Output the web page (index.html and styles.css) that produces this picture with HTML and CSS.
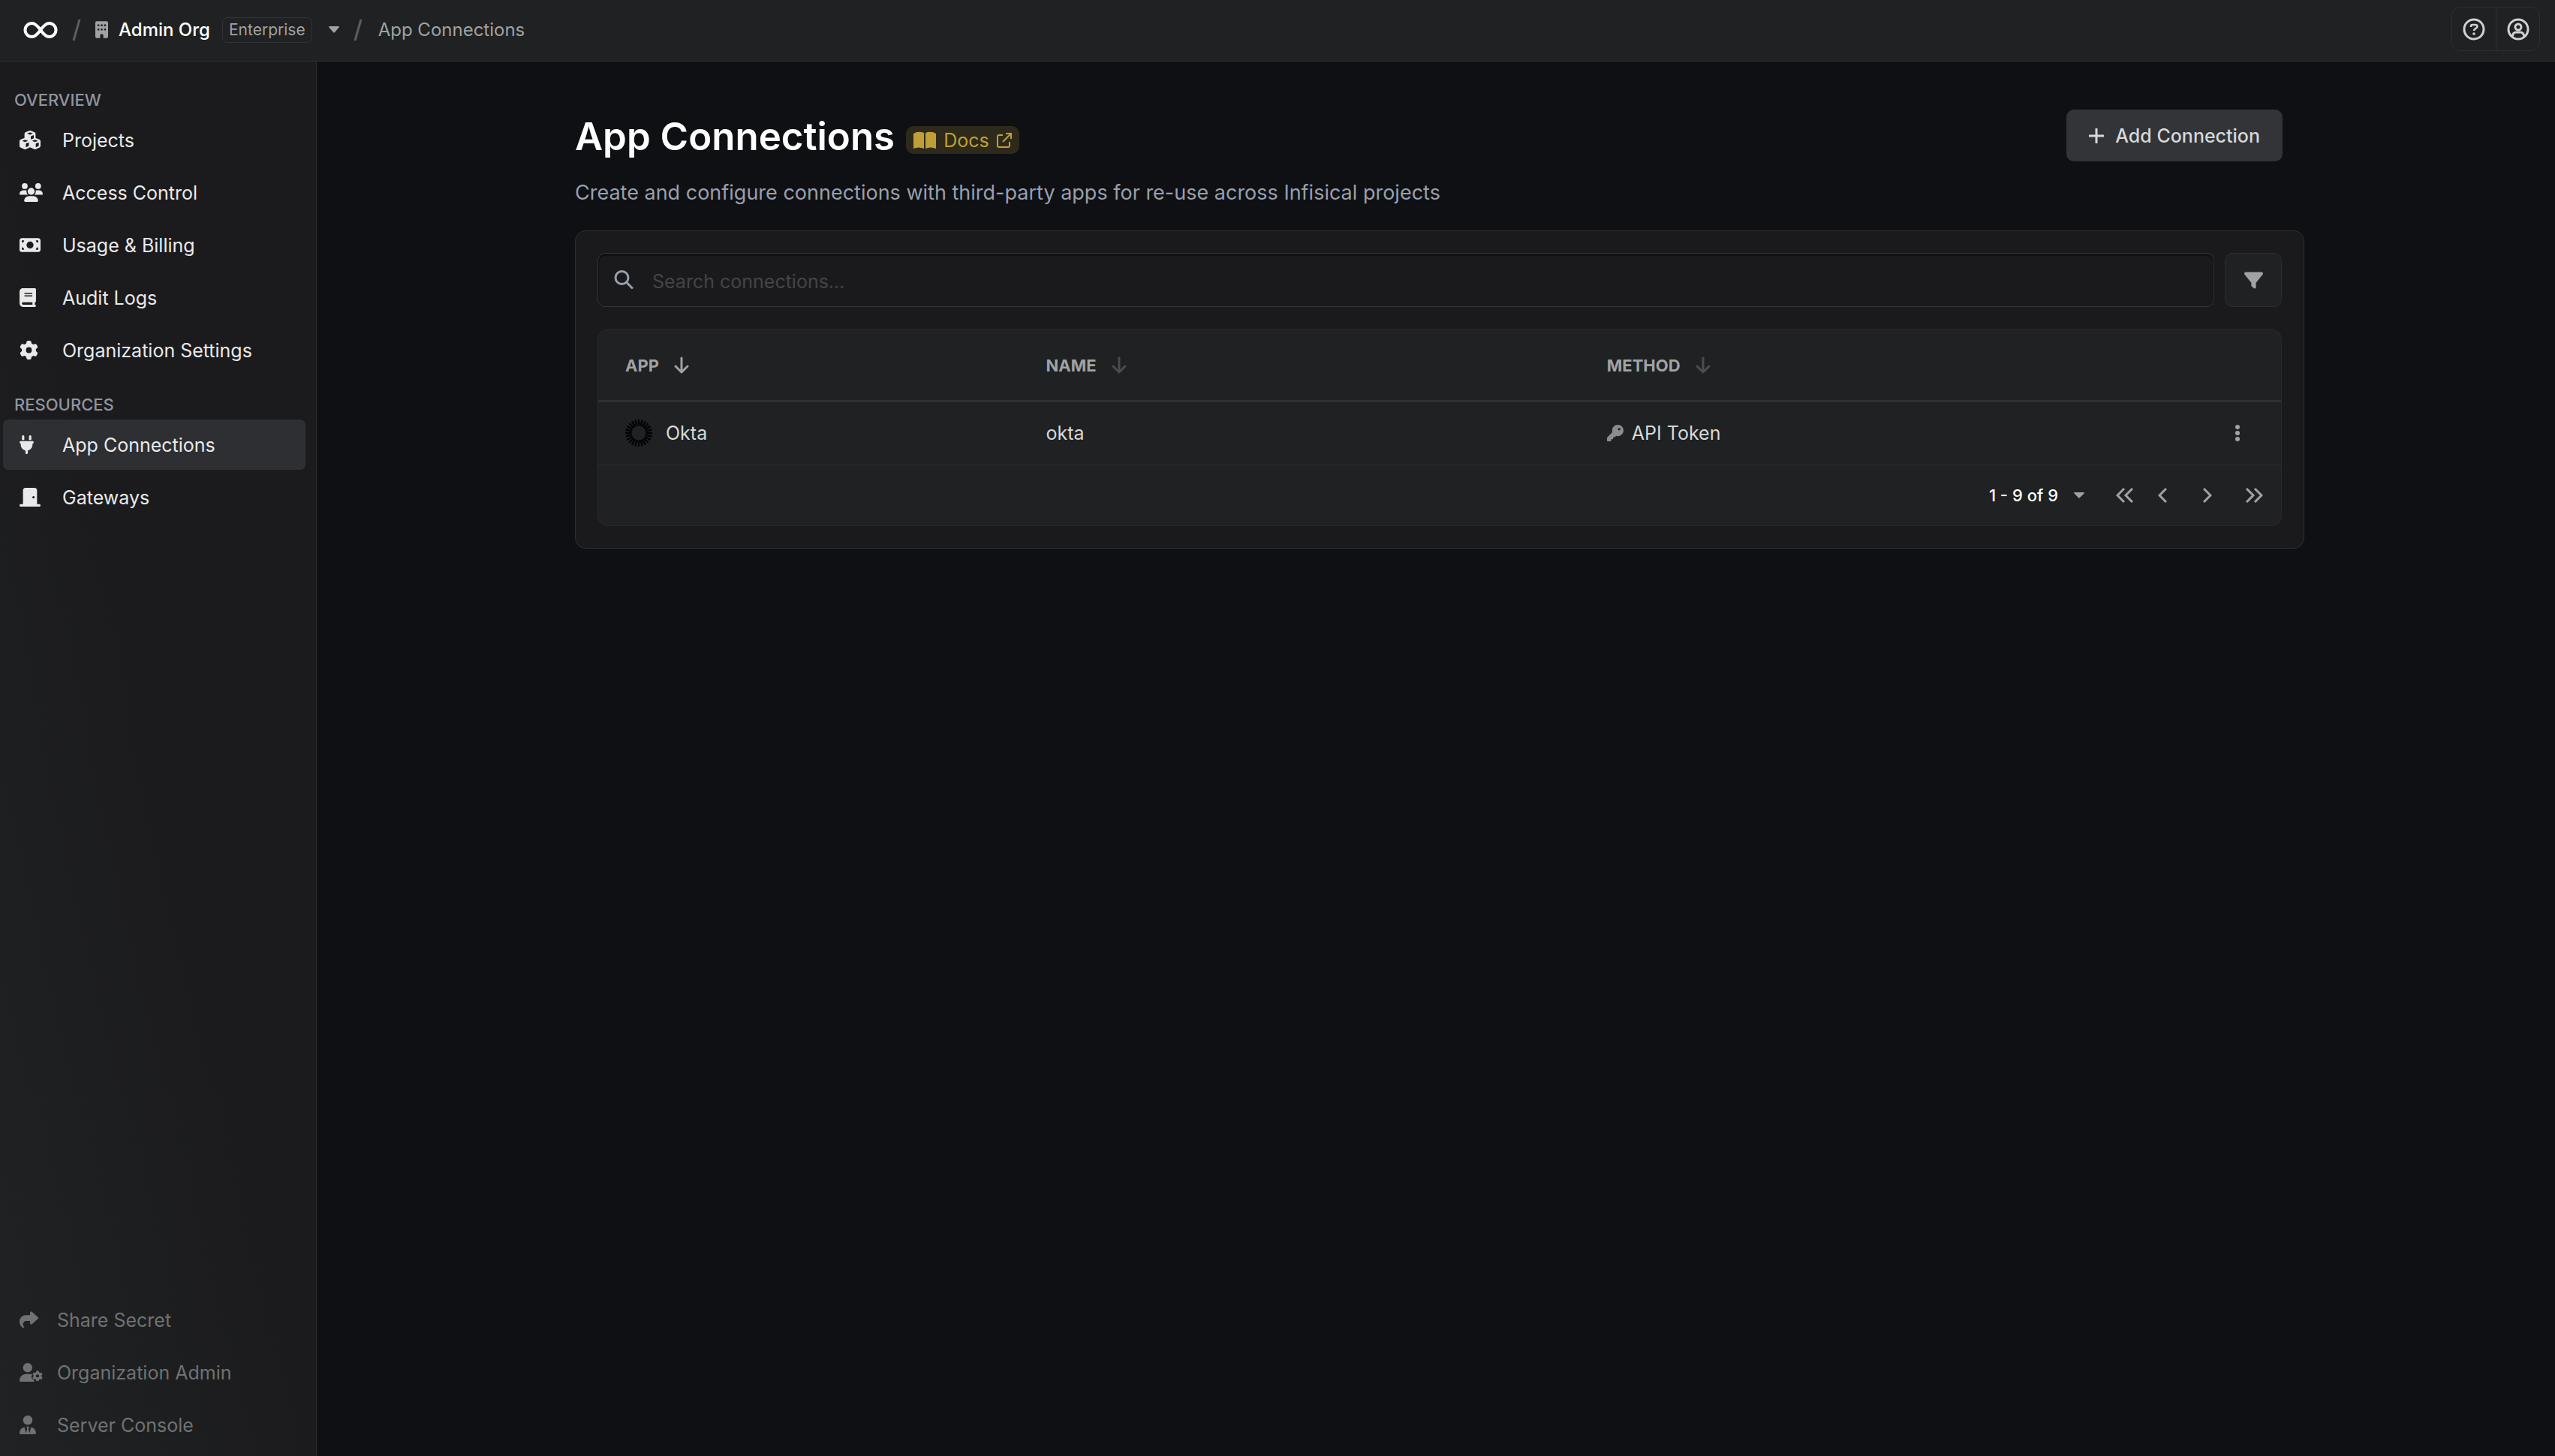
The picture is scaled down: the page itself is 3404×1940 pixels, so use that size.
FILE: index.html
```html
<!DOCTYPE html>
<html lang="en">
<head>
  <meta charset="UTF-8" />
  <meta name="viewport" content="width=device-width, initial-scale=1.0"/>
  <title>App Connections</title>
  <link rel="stylesheet" href="styles.css">
</head>
<body>

<header class="topbar">
  <nav class="breadcrumb" aria-label="Breadcrumb">
    <a href="#" class="logo" aria-label="Home">
      <svg width="46" height="22" viewBox="0 0 46 22"><path d="M23 11C18 4 15 2 11.500 2a9 9 0 0 0 0 18C15 20 18 18 23 11S31 2 34.500 2a9 9 0 0 1 0 18C31 20 28 18 23 11z" fill="none" stroke="currentColor" stroke-width="4"/></svg>
    </a>
    <svg class="slash" width="12" height="30" viewBox="0 0 12 30"><path d="M10 1L2 29" stroke="currentColor" stroke-width="3"/></svg>
    <a href="#" class="org">
      <svg width="17" height="23" viewBox="0 0 384 512"><path fill="currentColor" fill-rule="evenodd" d="M48 0C21.500 0 0 21.500 0 48V464c0 26.500 21.500 48 48 48h96V432c0-26.500 21.500-48 48-48s48 21.500 48 48v80h96c26.500 0 48-21.500 48-48V48c0-26.500-21.500-48-48-48H48zM64 96h56v56H64zM164 96h56v56h-56zM264 96h56v56h-56zM64 220h56v56H64zM164 220h56v56h-56zM264 220h56v56h-56z"/></svg>
      <span>Admin Org</span>
    </a>
    <span class="plan">Enterprise</span>
    <button class="icon-btn org-menu" aria-label="Switch organization">
      <svg width="14" height="9" viewBox="0 0 14 9"><path d="M1 0h12q1 0 1 1L8 8q-1 1-2 0L0 1q0-1 1-1z" fill="currentColor"/></svg>
    </button>
    <svg class="slash" width="12" height="30" viewBox="0 0 12 30"><path d="M10 1L2 29" stroke="currentColor" stroke-width="3"/></svg>
    <span class="current">App Connections</span>
  </nav>
  <div class="top-actions">
    <button aria-label="Help">
      <svg width="30" height="30" viewBox="0 0 30 30" fill="none" stroke="currentColor" stroke-width="3"><circle cx="15" cy="15" r="13"/><path d="M11 12v-1q0-2 2-2h4q2.500 0 2.500 2.500c0 2.500-4.500 2.500-4.500 5.500" stroke-width="2.600"/><circle cx="15" cy="21" r="1.800" fill="currentColor" stroke="none"/></svg>
    </button>
    <button aria-label="Account">
      <svg width="30" height="30" viewBox="0 0 30 30" fill="none" stroke="currentColor" stroke-width="3"><circle cx="15" cy="15" r="13"/><circle cx="15" cy="12" r="4"/><path d="M7 25q1-6 5-6h6q4 0 5 6"/></svg>
    </button>
  </div>
</header>

<div class="layout">
  <aside class="sidebar">
    <nav>
      <h2>OVERVIEW</h2>
      <ul>
        <li><a href="#"><span class="ico"><svg width="28" height="25" viewBox="0 0 576 512"><path fill="currentColor" fill-rule="evenodd" d="M290.800 48.600l78.400 29.700L288 109.500 206.800 78.300l78.400-29.700c1.800-.7 3.800-.7 5.700 0zM136 92.500V204.700c-1.300 .4-2.600 .8-3.900 1.300l-96 36.400C14.400 250.600 0 271.500 0 294.700V413.900c0 22.200 13.100 42.300 33.500 51.300l96 42.200c14.400 6.300 30.700 6.300 45.100 0L288 457.500l113.500 49.900c14.400 6.300 30.700 6.300 45.100 0l96-42.200c20.300-8.900 33.500-29.100 33.500-51.300V294.700c0-23.300-14.400-44.100-36.100-52.400l-96-36.400c-1.300-.5-2.600-.9-3.900-1.300V92.500c0-23.300-14.400-44.100-36.100-52.400l-96-36.400c-12.800-4.800-26.900-4.800-39.700 0l-96 36.400C150.400 48.400 136 69.300 136 92.500zM392 210.600l-82.400 31.200V152.600L392 121v89.600zM154.800 250.900l78.400 29.700L152 311.700 70.800 280.600l78.400-29.700c1.800-.7 3.800-.7 5.700 0zm18.800 204.400V354.800L256 323.200v95.900l-82.400 36.200zM421.200 250.900c1.800-.7 3.800-.7 5.700 0l78.400 29.700L424 311.700l-81.200-31.100 78.400-29.700zM523.200 421.200l-77.600 34.100V354.800L528 323.200v90.700c0 3.200-1.900 6-4.800 7.300z"/></svg></span>Projects</a></li>
        <li><a href="#"><span class="ico"><svg width="31" height="25" viewBox="0 0 640 512"><path fill="currentColor" d="M144 0a80 80 0 1 1 0 160A80 80 0 1 1 144 0zM512 0a80 80 0 1 1 0 160A80 80 0 1 1 512 0zM0 298.700C0 239.800 47.800 192 106.700 192h42.700c15.900 0 31 3.500 44.600 9.700c-1.300 7.200-1.900 14.700-1.900 22.300c0 38.200 16.800 72.500 43.300 96H21.300C9.600 320 0 310.400 0 298.700zM405.300 320c26-23.500 42.700-57.800 42.700-96c0-7.600-.7-15-1.900-22.300c13.600-6.300 28.700-9.700 44.600-9.700h42.700C592.200 192 640 239.800 640 298.700c0 11.800-9.600 21.300-21.300 21.300H405.300zM224 224a96 96 0 1 1 192 0 96 96 0 1 1-192 0zM128 485.300C128 411.700 187.700 352 261.300 352H378.700C452.300 352 512 411.700 512 485.300c0 14.700-11.900 26.700-26.700 26.700H154.700c-14.700 0-26.700-11.900-26.700-26.700z"/></svg></span>Access Control</a></li>
        <li><a href="#"><span class="ico"><svg width="28" height="25" viewBox="0 0 576 512"><path fill="currentColor" fill-rule="evenodd" d="M64 64C28.700 64 0 92.700 0 128V384c0 35.300 28.700 64 64 64H512c35.300 0 64-28.700 64-64V128c0-35.300-28.700-64-64-64H64zm64 320H64V320c35.300 0 64 28.700 64 64zM64 192V128h64c0 35.300-28.700 64-64 64zM448 384c0-35.300 28.700-64 64-64v64H448zm64-192c-35.300 0-64-28.700-64-64h64v64zM288 160a96 96 0 1 1 0 192 96 96 0 1 1 0-192z"/></svg></span>Usage &amp; Billing</a></li>
        <li><a href="#"><span class="ico"><svg width="22" height="25" viewBox="0 0 448 512"><path fill="currentColor" fill-rule="evenodd" d="M96 0C43 0 0 43 0 96V416c0 53 43 96 96 96H384h32c17.700 0 32-14.300 32-32s-14.300-32-32-32V384c17.700 0 32-14.300 32-32V32c0-17.700-14.300-32-32-32H384 96zm0 384H352v64H96c-17.700 0-32-14.300-32-32s14.300-32 32-32zm32-240c0-8.800 7.200-16 16-16H336c8.800 0 16 7.200 16 16s-7.200 16-16 16H144c-8.800 0-16-7.200-16-16zm16 48H336c8.800 0 16 7.200 16 16s-7.200 16-16 16H144c-8.800 0-16-7.200-16-16s7.200-16 16-16z"/></svg></span>Audit Logs</a></li>
        <li><a href="#"><span class="ico"><svg width="25" height="25" viewBox="0 0 512 512"><path id="gear" fill="currentColor" fill-rule="evenodd" d="M495.900 166.600c3.200 8.700 .5 18.400-6.400 24.600l-43.300 39.400c1.100 8.300 1.700 16.800 1.700 25.400s-.6 17.100-1.700 25.400l43.300 39.400c6.900 6.200 9.600 15.900 6.400 24.600c-4.400 11.900-9.700 23.300-15.800 34.300l-4.700 8.100c-6.600 11-14 21.400-22.100 31.200c-5.900 7.200-15.700 9.600-24.500 6.800l-55.700-17.700c-13.400 10.300-28.200 18.900-44 25.400l-12.500 57.100c-2 9.100-9 16.300-18.200 17.800c-13.800 2.300-28 3.500-42.500 3.500s-28.700-1.200-42.500-3.500c-9.200-1.500-16.200-8.700-18.200-17.800l-12.500-57.100c-15.800-6.500-30.600-15.100-44-25.400L83.100 425.900c-8.800 2.800-18.600 .3-24.500-6.800c-8.100-9.800-15.500-20.200-22.100-31.200l-4.700-8.100c-6.100-11-11.400-22.400-15.800-34.300c-3.200-8.700-.5-18.400 6.400-24.600l43.300-39.400C64.600 273.100 64 264.600 64 256s.6-17.100 1.700-25.400L22.400 191.200c-6.900-6.200-9.600-15.900-6.400-24.600c4.400-11.900 9.700-23.300 15.800-34.300l4.700-8.100c6.600-11 14-21.400 22.100-31.200c5.900-7.200 15.700-9.600 24.500-6.800l55.700 17.700c13.400-10.300 28.200-18.900 44-25.400l12.500-57.100c2-9.100 9-16.300 18.200-17.800C227.300 1.200 241.500 0 256 0s28.700 1.200 42.500 3.500c9.200 1.500 16.200 8.700 18.200 17.800l12.500 57.100c15.800 6.500 30.600 15.100 44 25.400l55.700-17.700c8.800-2.800 18.600-.3 24.500 6.800c8.100 9.800 15.500 20.200 22.100 31.200l4.700 8.100c6.100 11 11.400 22.400 15.800 34.300zM256 336a80 80 0 1 0 0-160 80 80 0 1 0 0 160z"/></svg></span>Organization Settings</a></li>
      </ul>
      <h2>RESOURCES</h2>
      <ul>
        <li><a href="#" class="active"><span class="ico"><svg width="19" height="25" viewBox="0 0 384 512"><path fill="currentColor" d="M96 0C78.300 0 64 14.300 64 32v96h64V32c0-17.700-14.300-32-32-32zM288 0c-17.700 0-32 14.300-32 32v96h64V32c0-17.700-14.300-32-32-32zM32 160c-17.700 0-32 14.300-32 32s14.300 32 32 32v32c0 77.400 55 142 128 156.800V480c0 17.700 14.300 32 32 32s32-14.300 32-32V412.800C297 398 352 333.400 352 256V224c17.700 0 32-14.300 32-32s-14.300-32-32-32H32z"/></svg></span>App Connections</a></li>
        <li><a href="#"><span class="ico"><svg width="28" height="25" viewBox="0 0 576 512"><path fill="currentColor" fill-rule="evenodd" d="M96 64c0-35.300 28.700-64 64-64H416c35.300 0 64 28.700 64 64V448h64c17.700 0 32 14.300 32 32s-14.300 32-32 32H32c-17.700 0-32-14.300-32-32s14.300-32 32-32H96V64zM384 288a32 32 0 1 0 0-64 32 32 0 1 0 0 64z"/></svg></span>Gateways</a></li>
      </ul>
    </nav>
    <ul class="footer-links">
      <li><a href="#"><span class="ico"><svg width="25" height="25" viewBox="0 0 512 512"><path fill="currentColor" d="M307 34.800c-11.500 5.100-19 16.600-19 29.200v64H176C78.800 128 0 206.800 0 304C0 417.300 81.500 467.900 100.200 478.100c2.500 1.400 5.300 1.900 8.100 1.900c10.900 0 19.700-8.900 19.700-19.700c0-7.500-4.300-14.400-9.800-19.500C108.800 431.900 96 414.400 96 384c0-53 43-96 96-96h96v64c0 12.600 7.400 24.100 19 29.200s25 3 34.400-5.400l160-144c6.700-6.100 10.600-14.700 10.600-23.800s-3.800-17.700-10.600-23.800l-160-144c-9.400-8.500-22.900-10.600-34.400-5.400z"/></svg></span>Share Secret</a></li>
      <li><a href="#"><span class="ico"><svg width="31" height="25" viewBox="0 0 640 512"><path fill="currentColor" d="M224 256A128 128 0 1 0 224 0a128 128 0 1 0 0 256zM178 304C80 304 0 384 0 482c0 17 13 30 30 30H410c-12-10-14-26-12-40-34-12-58-44-70-80-8-24 8-40 24-56-20-18-10-32-40-32z"/><use href="#gear" transform="translate(352 212) scale(.56)"/></svg></span>Organization Admin</a></li>
      <li><a href="#"><span class="ico"><svg width="22" height="25" viewBox="0 0 448 512"><path fill="currentColor" d="M96 128a128 128 0 1 0 256 0A128 128 0 1 0 96 128zm94.500 200.200l18.600 31L175.800 483.100l-36-146.900c-2-8.100-9.800-13.400-17.900-11.300C51.900 342.400 0 405.800 0 481.300c0 17 13.800 30.700 30.700 30.700H417.300c17 0 30.700-13.800 30.700-30.700c0-75.500-51.900-138.900-121.900-156.400c-8.100-2-15.900 3.300-17.900 11.300l-36 146.900L238.900 359.200l18.600-31c6.400-10.700-1.300-24.200-13.700-24.200H204.300c-12.400 0-20.100 13.600-13.700 24.200z"/></svg></span>Server Console</a></li>
    </ul>
  </aside>

  <main class="content">
    <div class="page">
      <div class="page-head">
        <div>
          <div class="title-row">
            <h1>App Connections</h1>
            <a href="#" class="docs">
              <svg width="30" height="24" viewBox="0 0 30 24"><path d="M0 3Q6-1 14 2V23Q7 20 0 23zM16 2Q24-1 30 3V23Q23 20 16 23z" fill="currentColor"/></svg>
              <span>Docs</span>
              <svg width="20" height="20" viewBox="0 0 20 20" fill="none" stroke="currentColor" stroke-width="2"><path d="M8 3H3Q1 3 1 5V17Q1 19 3 19H15Q17 19 17 17V12M12 1H19V8M19 1L8 12"/></svg>
            </a>
          </div>
          <p class="subtitle">Create and configure connections with third-party apps for re-use across Infisical projects</p>
        </div>
        <button class="add-btn">
          <svg width="20" height="20" viewBox="0 0 20 20"><path d="M10 1V19M1 10H19" stroke="currentColor" stroke-width="3" stroke-linecap="round"/></svg>
          Add Connection
        </button>
      </div>

      <section class="panel">
        <div class="toolbar">
          <label class="search">
            <svg width="26" height="26" viewBox="0 0 26 26" fill="none" stroke="currentColor" stroke-width="3"><circle cx="10.500" cy="10" r="8.500"/><path d="M16.500 16L25 24.500"/></svg>
            <input type="text" placeholder="Search connections..." aria-label="Search connections">
          </label>
          <button class="filter-btn" aria-label="Filter">
            <svg width="25" height="25" viewBox="0 0 512 512"><path fill="currentColor" d="M3.900 54.900C10.500 40.900 24.500 32 40 32H472c15.500 0 29.500 8.900 36.100 22.900s4.600 30.500-5.200 42.500L320 320.900V448c0 12.100-6.800 23.200-17.700 28.600s-23.800 4.300-33.500-3l-64-48c-8.100-6-12.800-15.500-12.800-25.600V320.900L9 97.300C-.7 85.400-2.800 68.800 3.900 54.900z"/></svg>
          </button>
        </div>

        <div class="table-box">
          <table>
            <thead>
              <tr>
                <th class="col-app"><span class="cell">APP <button class="sort on" aria-label="Sort by app"><svg width="20" height="24" viewBox="0 0 20 24"><path d="M10 2V21M2 13L10 21L18 13" fill="none" stroke="currentColor" stroke-width="3" stroke-linecap="round" stroke-linejoin="round"/></svg></button></span></th>
                <th class="col-name"><span class="cell">NAME <button class="sort" aria-label="Sort by name"><svg width="20" height="24" viewBox="0 0 20 24"><path d="M10 2V21M2 13L10 21L18 13" fill="none" stroke="currentColor" stroke-width="3" stroke-linecap="round" stroke-linejoin="round"/></svg></button></span></th>
                <th class="col-method"><span class="cell">METHOD <button class="sort" aria-label="Sort by method"><svg width="20" height="24" viewBox="0 0 20 24"><path d="M10 2V21M2 13L10 21L18 13" fill="none" stroke="currentColor" stroke-width="3" stroke-linecap="round" stroke-linejoin="round"/></svg></button></span></th>
                <th></th>
              </tr>
            </thead>
            <tbody>
              <tr>
                <td><span class="cell app"><svg width="36" height="36" viewBox="-18 -18 36 36" stroke="#000" stroke-width="2.300"><path id="rays" d="M9.500 0L18 0M9.200 2.500L17.400 4.700M8.200 4.800L15.600 9M6.700 6.700L12.700 12.700M4.800 8.200L9 15.600M2.500 9.200L4.700 17.400"/><use href="#rays" transform="rotate(90)"/><use href="#rays" transform="rotate(180)"/><use href="#rays" transform="rotate(270)"/></svg>Okta</span></td>
                <td>okta</td>
                <td><span class="cell method"><svg width="22" height="22" viewBox="0 0 512 512"><path fill="currentColor" fill-rule="evenodd" d="M336 352c97.200 0 176-78.800 176-176S433.200 0 336 0S160 78.800 160 176c0 18.700 2.900 36.800 8.300 53.700L7 391c-4.500 4.500-7 10.600-7 17v80c0 13.300 10.700 24 24 24h80c13.300 0 24-10.700 24-24V448h40c13.300 0 24-10.700 24-24V384h40c6.400 0 12.500-2.500 17-7l33.300-33.300c16.900 5.400 35 8.300 53.700 8.300zM376 96a40 40 0 1 1 0 80 40 40 0 1 1 0-80z"/></svg>API Token</span></td>
                <td class="more"><button class="icon-btn" aria-label="More options"><svg width="6" height="24" viewBox="0 0 6 24" fill="currentColor"><circle cx="3" cy="4" r="3"/><circle cx="3" cy="12" r="3"/><circle cx="3" cy="20" r="3"/></svg></button></td>
              </tr>
            </tbody>
          </table>
          <div class="pagination">
            <button class="range">1 - 9 of 9 <svg width="14" height="8" viewBox="0 0 14 8"><path d="M1 0h12q1 0 1 1L8 7q-1 1-2 0L0 1q0-1 1-1z" fill="currentColor"/></svg></button>
            <button class="icon-btn first" aria-label="First page"><svg width="24" height="20" viewBox="0 0 24 20"><path d="M11 1L2 10L11 19M22 1L13 10L22 19"/></svg></button>
            <button class="icon-btn prev" aria-label="Previous page"><svg width="12" height="20" viewBox="0 0 12 20"><path d="M11 1L2 10L11 19"/></svg></button>
            <button class="icon-btn next" aria-label="Next page"><svg width="12" height="20" viewBox="0 0 12 20"><path d="M1 1L10 10L1 19"/></svg></button>
            <button class="icon-btn last" aria-label="Last page"><svg width="24" height="20" viewBox="0 0 24 20"><path d="M2 1L11 10L2 19M13 1L22 10L13 19"/></svg></button>
          </div>
        </div>
      </section>
    </div>
  </main>
</div>

</body>
</html>
```

FILE: styles.css
```css
* { box-sizing: border-box; }
body {
  margin: 0;
  min-height: 100vh;
  display: flex;
  flex-direction: column;
  background: #0e1014;
  color: #d6d8db;
  font-family: Inter, sans-serif;
  font-size: 25px;
  line-height: 36px;
}
h1, h2, p, ul { margin: 0; padding: 0; }
ul { list-style: none; }
a { color: inherit; text-decoration: none; }
svg { display: block; flex-shrink: 0; }
button {
  font: inherit;
  color: inherit;
  background: none;
  border: none;
  padding: 0;
  cursor: pointer;
}

/* top bar */
.topbar {
  height: 82px;
  display: flex;
  justify-content: space-between;
  align-items: center;
  padding: 0 20px 4px 31px;
  background: #1f2122;
  border-bottom: 1px solid #2d2f33;
}
.breadcrumb {
  display: flex;
  align-items: center;
  padding-top: 2px;
  font-size: 24px;
  color: #a1a2a4;
}
.logo { color: #fff; }
.slash { color: #5c5d60; margin-left: 19px; }
.org {
  display: flex;
  align-items: center;
  gap: 14px;
  margin-left: 19px;
}
.org span { color: #fff; font-weight: 500; }
.plan {
  margin: 0 22px 0 16px;
  padding: 0 8px;
  height: 34px;
  line-height: 32px;
  font-size: 21px;
  border: 1px solid #323439;
  border-radius: 7px;
}
.current { margin-left: 21px; }
.top-actions {
  display: flex;
  border: 1px solid #2d2f33;
  border-radius: 12px;
  color: #d0d1d2;
}
.top-actions button {
  height: 57px;
  width: 58px;
  display: flex;
  align-items: center;
  justify-content: center;
}
.top-actions button + button { border-left: 1px solid #2d2f33; }

.layout { flex: 1; display: flex; }

/* sidebar */
.sidebar {
  width: 422px;
  flex-shrink: 0;
  display: flex;
  flex-direction: column;
  justify-content: space-between;
  padding: 37px 14px 8px 4px;
  background: linear-gradient(to top right, #202224, #1b1b1d 50%, #1b1b1d);
  border-right: 1px solid #2d2f33;
}
.sidebar h2 {
  margin: 0 0 6px 15px;
  font-size: 22px;
  line-height: 28px;
  font-weight: 500;
  color: #9095a1;
}
.sidebar ul + h2 { margin-top: 25px; }
.sidebar ul {
  display: flex;
  flex-direction: column;
  gap: 3px;
}
.sidebar li a {
  display: flex;
  align-items: center;
  height: 67px;
  padding-left: 22px;
  border-radius: 7px;
  color: #e9e9ea;
}
.sidebar li a.active { background: #2d2f32; }
.ico { width: 57px; flex-shrink: 0; }
.footer-links .ico { width: 50px; }
.sidebar .footer-links a { color: #707174; }

/* main */
.content {
  flex: 1;
  padding: 64px 0 64px 10px;
}
.page {
  max-width: 2304px;
  margin: 0 auto;
}
.page-head {
  display: flex;
  justify-content: space-between;
  align-items: flex-start;
  padding-right: 29px;
  margin-bottom: 25px;
}
.title-row {
  display: flex;
  align-items: center;
  gap: 15px;
}
h1 {
  color: #fff;
  font-size: 51px;
  line-height: 72px;
  font-weight: 600;
}
.docs {
  display: flex;
  align-items: center;
  gap: 10px;
  height: 37px;
  margin-top: 9px;
  padding: 0 10px;
  border-radius: 10px;
  background: #2e2a1b;
  color: #bf9f36;
}
.subtitle {
  margin-top: 14px;
  font-size: 27px;
  line-height: 50px;
  color: #9a9fac;
}
.add-btn {
  display: flex;
  align-items: center;
  gap: 15px;
  height: 69px;
  padding: 0 30px;
  border-radius: 10px;
  background: #323438;
  font-weight: 500;
}

.panel {
  padding: 29px;
  border: 1px solid #2d2f33;
  border-radius: 14px;
  background: #1a1a1c;
}
.toolbar {
  display: flex;
  gap: 14px;
  margin-bottom: 29px;
}
.search {
  flex: 1;
  height: 72px;
  display: flex;
  align-items: center;
  gap: 25px;
  padding-left: 21px;
  border: 1px solid #323439;
  border-radius: 10px;
  color: #9a9fac;
  box-shadow: inset 0 2px 1px 1px #111114;
}
.search input {
  flex: 1;
  border: none;
  outline: none;
  padding: 4px 0 0;
  background: transparent;
  font: inherit;
  color: #d6d8db;
}
.search input::placeholder { color: #434449; opacity: 1; }
.filter-btn {
  width: 76px;
  height: 72px;
  display: flex;
  align-items: center;
  justify-content: center;
  border: 1px solid #2a2c2e;
  border-radius: 10px;
  background: #1f2122;
  color: #a1a2a4;
}

/* table */
.table-box {
  border: 1px solid #27292b;
  border-radius: 14px;
  background: #1f2122;
  overflow: hidden;
}
table {
  width: 100%;
  table-layout: fixed;
  border-collapse: collapse;
}
.col-app { width: 25%; }
.col-name, .col-method { width: 33.333%; }
th, td {
  padding: 0 36px;
  text-align: left;
}
th {
  height: 95px;
  padding-top: 2px;
  border-bottom: 3px solid #2d2f33;
  font-size: 22px;
  font-weight: 700;
  color: #a1a2a4;
}
td {
  height: 85px;
  border-bottom: 1px solid #2d2f33;
}
.cell { display: flex; align-items: center; }
.sort { margin-left: 20px; color: #4b4c4f; }
.sort.on { color: #a1a2a4; }
.app { gap: 18px; }
.method { gap: 11px; }
.method svg { color: #8b8c8e; }
.icon-btn { color: #a1a2a4; }
.more .icon-btn { display: block; margin: 0 19px 0 auto; }

.pagination {
  display: flex;
  align-items: center;
  justify-content: flex-end;
  height: 80px;
  padding-right: 24px;
  color: #a1a2a4;
}
.pagination .first { margin-left: 42px; }
.pagination .prev { margin-left: 32px; }
.pagination .next { margin-left: 48px; }
.pagination .last { margin-left: 44px; }
.pagination .icon-btn path { fill: none; stroke: currentColor; stroke-width: 3; }
.range {
  display: flex;
  align-items: center;
  gap: 21px;
  font-size: 22px;
  font-weight: 500;
  color: #fff;
}
.range svg { color: #a1a2a4; }
```
